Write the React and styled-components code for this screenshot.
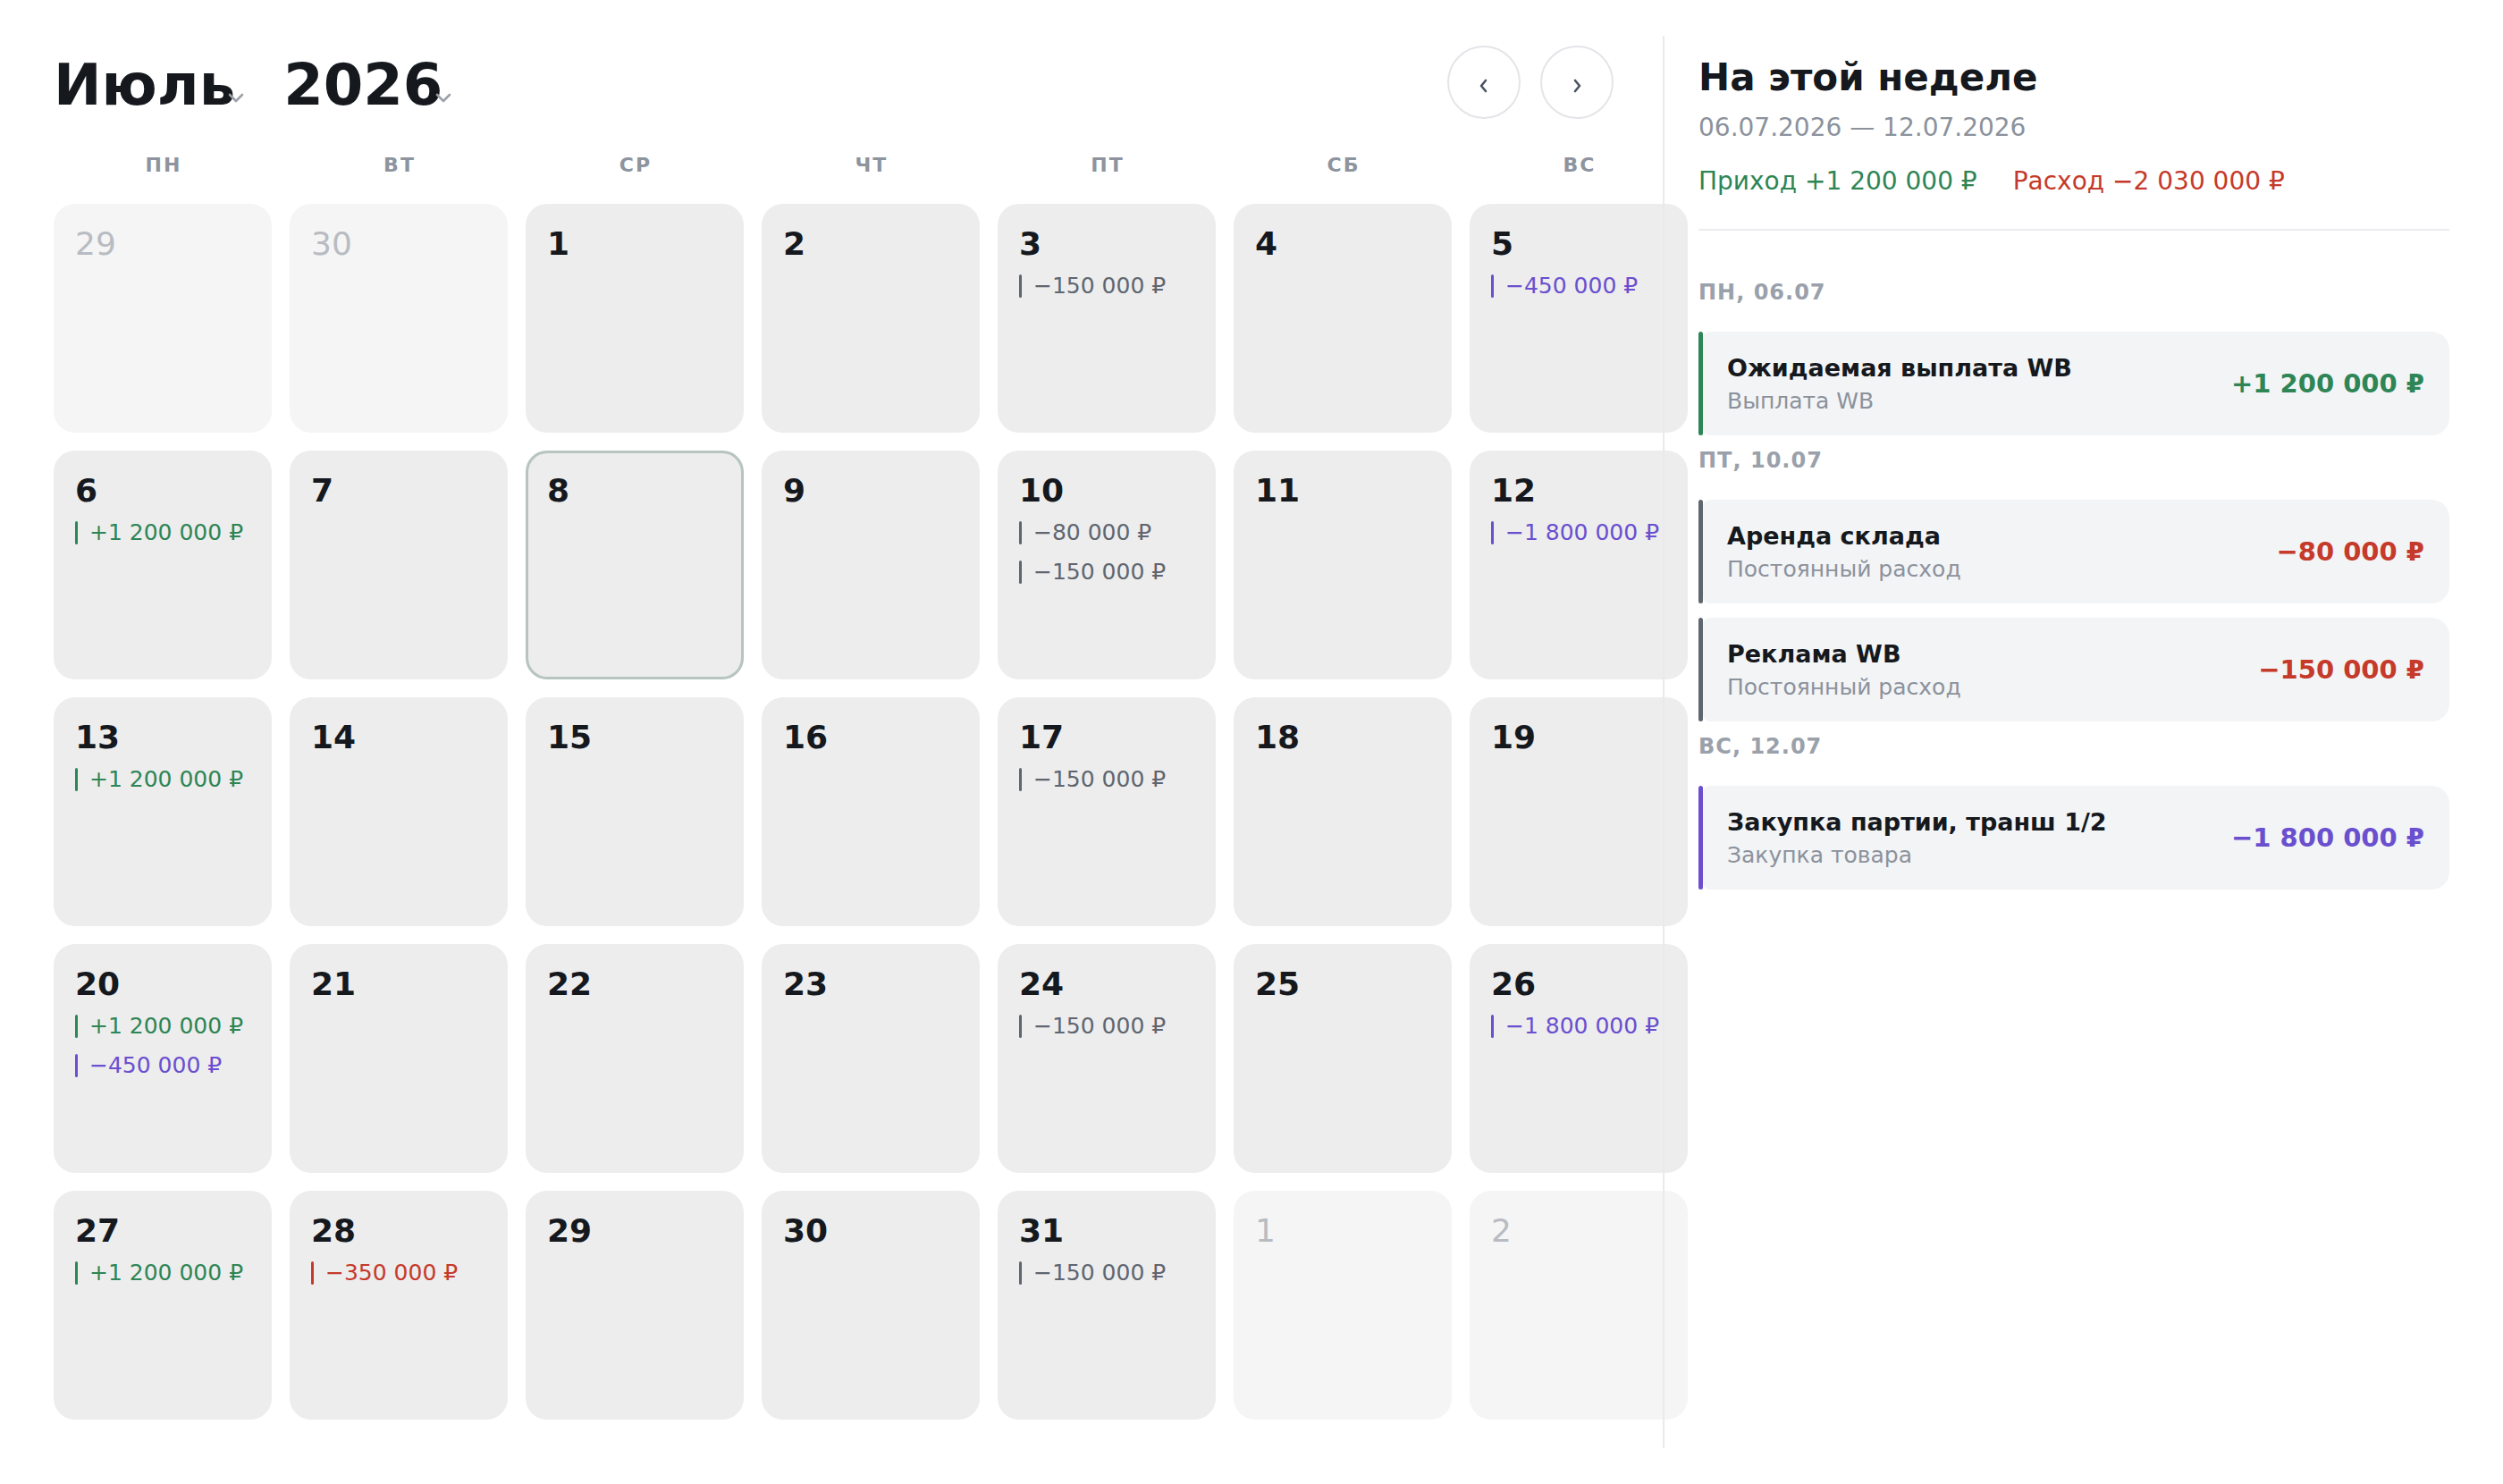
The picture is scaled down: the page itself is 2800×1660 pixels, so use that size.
import React from 'react';
import styled, { createGlobalStyle } from 'styled-components';

const Global = createGlobalStyle`
  html, body { margin: 0; padding: 0; background: #ffffff; }
  body { font-family: "DejaVu Sans", "Noto Sans", sans-serif; color: #15191e; }
  * { box-sizing: border-box; }
`;

const COLORS = {
  gray: '#5f6670',
  purple: '#6a4fcf',
  green: '#2e8555',
  red: '#c53a2a',
};

const Page = styled.div`
  display: grid;
  grid-template-columns: 1860px 940px;
  width: 2800px;
  height: 1660px;
  padding: 40px 0;
  overflow: hidden;
`;

const Main = styled.main`
  min-width: 0;
  padding: 11px 55px 0 60px;
`;

const Header = styled.header`
  display: flex;
  align-items: center;
  justify-content: space-between;
  height: 82px;
`;

const TitleGroup = styled.div`
  display: flex;
  align-items: center;
  gap: 44px;
  margin-top: 6px;
`;

const Picker = styled.div`
  position: relative;
  padding-right: 10px;
  font-size: 64px;
  font-weight: 700;
  line-height: 75px;
  color: #15191e;
`;

const Caret = styled.svg`
  position: absolute;
  right: -1px;
  top: 46px;
  width: 20px;
  height: 11px;
`;

const NavGroup = styled.div`
  display: flex;
  gap: 22px;
`;

const NavButton = styled.button`
  width: 82px;
  height: 82px;
  border-radius: 50%;
  border: 2px solid #e4e5e9;
  background: #ffffff;
  display: flex;
  align-items: center;
  justify-content: center;
  padding: 8px 0 0;
  color: #4b5360;
`;

const Weekdays = styled.div`
  display: grid;
  grid-template-columns: repeat(7, 244px);
  column-gap: 20px;
  margin-top: 39px;
`;

const Weekday = styled.div`
  text-align: center;
  font-size: 22px;
  font-weight: 700;
  letter-spacing: 2px;
  line-height: 26px;
  color: #8d949e;
  padding-left: 2px;
`;

const Grid = styled.div`
  display: grid;
  grid-template-columns: repeat(7, 244px);
  grid-auto-rows: 256px;
  gap: 20px;
  margin-top: 30px;
`;

const Cell = styled.div`
  display: flex;
  flex-direction: column;
  padding: 24px;
  border-radius: 24px;
  background: ${(p) => (p.$muted ? '#f5f5f5' : '#ededed')};
  box-shadow: ${(p) => (p.$today ? 'inset 0 0 0 3px #b7c4bf' : 'none')};
`;

const DayNum = styled.div`
  font-size: 36px;
  line-height: 42px;
  font-weight: ${(p) => (p.$muted ? 400 : 700)};
  color: ${(p) => (p.$muted ? '#b8bcc2' : '#15191e')};
`;

const Events = styled.div`
  display: flex;
  flex-direction: column;
  gap: 18px;
  margin-top: 13px;
`;

const EventLine = styled.div`
  display: flex;
  align-items: center;
  gap: 13px;
  font-size: 25px;
  line-height: 26px;
  white-space: nowrap;
  color: ${(p) => COLORS[p.$tone]};
`;

const Bar = styled.span`
  flex-shrink: 0;
  width: 3px;
  height: 26px;
  border-radius: 2px;
  background: currentColor;
`;

const Side = styled.aside`
  position: relative;
  border-left: 2px solid #e9e9ef;
  padding: 22px 60px 0 38px;
`;

const SideTitle = styled.h2`
  margin: 0;
  font-size: 42px;
  font-weight: 700;
  line-height: 49px;
  color: #15191e;
`;

const Range = styled.div`
  margin-top: 15px;
  font-size: 28px;
  line-height: 33px;
  color: #8b929c;
`;

const Totals = styled.div`
  display: flex;
  gap: 40px;
  margin-top: 27px;
  font-size: 28px;
  line-height: 33px;
`;

const Total = styled.span`
  color: ${(p) => COLORS[p.$tone]};
`;

const Divider = styled.div`
  margin-top: 37px;
  height: 2px;
  background: #ececf0;
`;

const Groups = styled.div`
  display: flex;
  flex-direction: column;
  gap: 14px;
  margin-top: 55px;
`;

const Group = styled.section`
  display: flex;
  flex-direction: column;
`;

const GroupLabel = styled.div`
  margin-bottom: 30px;
  font-size: 24px;
  font-weight: 700;
  letter-spacing: 1px;
  line-height: 28px;
  color: #9aa1ab;
`;

const Cards = styled.div`
  display: flex;
  flex-direction: column;
  gap: 16px;
`;

const Card = styled.div`
  display: flex;
  min-height: 116px;
`;

const Stripe = styled.span`
  flex-shrink: 0;
  width: 5px;
  border-radius: 3px;
  background: ${(p) => COLORS[p.$tone]};
`;

const CardBody = styled.div`
  flex: 1;
  display: flex;
  align-items: center;
  justify-content: space-between;
  padding: 24px 28px 24px 27px;
  border-radius: 8px 20px 20px 8px;
  background: #f3f4f6;
`;

const CardText = styled.div`
  display: flex;
  flex-direction: column;
  gap: 7px;
`;

const CardTitle = styled.div`
  font-size: 27px;
  font-weight: 700;
  line-height: 31px;
  color: #15191e;
`;

const CardSub = styled.div`
  font-size: 25px;
  line-height: 29px;
  color: #8b929c;
`;

const Amount = styled.div`
  font-size: 29px;
  font-weight: 700;
  white-space: nowrap;
  color: ${(p) => COLORS[p.$tone]};
`;

const WEEKDAYS = ['ПН', 'ВТ', 'СР', 'ЧТ', 'ПТ', 'СБ', 'ВС'];

const e = (tone, text) => ({ tone, text });
const D = (n, events = [], extra = {}) => ({ n, events, ...extra });

const DAYS = [
  D(29, [], { muted: true }), D(30, [], { muted: true }), D(1), D(2),
  D(3, [e('gray', '−150 000 ₽')]), D(4), D(5, [e('purple', '−450 000 ₽')]),
  D(6, [e('green', '+1 200 000 ₽')]), D(7), D(8, [], { today: true }), D(9),
  D(10, [e('gray', '−80 000 ₽'), e('gray', '−150 000 ₽')]), D(11),
  D(12, [e('purple', '−1 800 000 ₽')]),
  D(13, [e('green', '+1 200 000 ₽')]), D(14), D(15), D(16),
  D(17, [e('gray', '−150 000 ₽')]), D(18), D(19),
  D(20, [e('green', '+1 200 000 ₽'), e('purple', '−450 000 ₽')]), D(21), D(22), D(23),
  D(24, [e('gray', '−150 000 ₽')]), D(25), D(26, [e('purple', '−1 800 000 ₽')]),
  D(27, [e('green', '+1 200 000 ₽')]), D(28, [e('red', '−350 000 ₽')]), D(29), D(30),
  D(31, [e('gray', '−150 000 ₽')]), D(1, [], { muted: true }), D(2, [], { muted: true }),
];

const WEEK = [
  {
    label: 'ПН, 06.07',
    items: [
      { title: 'Ожидаемая выплата WB', sub: 'Выплата WB', amount: '+1 200 000 ₽', stripe: 'green', tone: 'green' },
    ],
  },
  {
    label: 'ПТ, 10.07',
    items: [
      { title: 'Аренда склада', sub: 'Постоянный расход', amount: '−80 000 ₽', stripe: 'gray', tone: 'red' },
      { title: 'Реклама WB', sub: 'Постоянный расход', amount: '−150 000 ₽', stripe: 'gray', tone: 'red' },
    ],
  },
  {
    label: 'ВС, 12.07',
    items: [
      { title: 'Закупка партии, транш 1/2', sub: 'Закупка товара', amount: '−1 800 000 ₽', stripe: 'purple', tone: 'purple' },
    ],
  },
];

function CaretIcon() {
  return (
    <Caret viewBox="0 0 20 11" aria-hidden="true">
      <polyline points="3,2 10,9 17,2" fill="none" stroke="#9ba1aa" strokeWidth="2.6" strokeLinecap="round" strokeLinejoin="round" />
    </Caret>
  );
}

function Arrow({ dir }) {
  const pts = dir === 'left' ? '8,2 3,8 8,14' : '4,2 9,8 4,14';
  return (
    <svg width="12" height="16" viewBox="0 0 12 16" aria-hidden="true">
      <polyline points={pts} fill="none" stroke="currentColor" strokeWidth="2.6" strokeLinecap="round" strokeLinejoin="round" />
    </svg>
  );
}

export default function App() {
  return (
    <>
      <Global />
      <Page>
        <Main>
          <Header>
            <TitleGroup>
              <Picker>
                Июль
                <CaretIcon />
              </Picker>
              <Picker>
                2026
                <CaretIcon />
              </Picker>
            </TitleGroup>
            <NavGroup>
              <NavButton aria-label="Предыдущий месяц"><Arrow dir="left" /></NavButton>
              <NavButton aria-label="Следующий месяц"><Arrow dir="right" /></NavButton>
            </NavGroup>
          </Header>

          <Weekdays>
            {WEEKDAYS.map((w) => (
              <Weekday key={w}>{w}</Weekday>
            ))}
          </Weekdays>

          <Grid>
            {DAYS.map((d, i) => (
              <Cell key={i} $muted={d.muted} $today={d.today}>
                <DayNum $muted={d.muted}>{d.n}</DayNum>
                {d.events.length > 0 && (
                  <Events>
                    {d.events.map((ev, j) => (
                      <EventLine key={j} $tone={ev.tone}>
                        <Bar />
                        {ev.text}
                      </EventLine>
                    ))}
                  </Events>
                )}
              </Cell>
            ))}
          </Grid>
        </Main>

        <Side>
          <SideTitle>На этой неделе</SideTitle>
          <Range>06.07.2026 — 12.07.2026</Range>
          <Totals>
            <Total $tone="green">Приход +1 200 000 ₽</Total>
            <Total $tone="red">Расход −2 030 000 ₽</Total>
          </Totals>
          <Divider />
          <Groups>
            {WEEK.map((g) => (
              <Group key={g.label}>
                <GroupLabel>{g.label}</GroupLabel>
                <Cards>
                  {g.items.map((it) => (
                    <Card key={it.title}>
                      <Stripe $tone={it.stripe} />
                      <CardBody>
                        <CardText>
                          <CardTitle>{it.title}</CardTitle>
                          <CardSub>{it.sub}</CardSub>
                        </CardText>
                        <Amount $tone={it.tone}>{it.amount}</Amount>
                      </CardBody>
                    </Card>
                  ))}
                </Cards>
              </Group>
            ))}
          </Groups>
        </Side>
      </Page>
    </>
  );
}
